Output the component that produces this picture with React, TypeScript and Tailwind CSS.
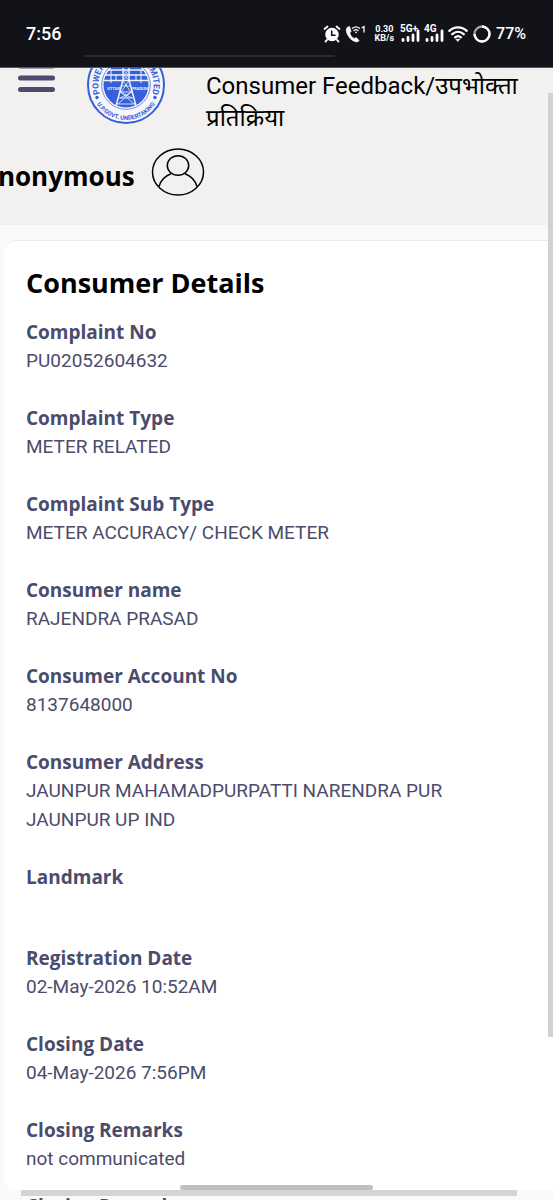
import type { ReactNode } from "react";

interface Detail {
  label: string;
  value: string;
}

const details: Detail[] = [
  { label: "Complaint No", value: "PU02052604632" },
  { label: "Complaint Type", value: "METER RELATED" },
  { label: "Complaint Sub Type", value: "METER ACCURACY/ CHECK METER" },
  { label: "Consumer name", value: "RAJENDRA PRASAD" },
  { label: "Consumer Account No", value: "8137648000" },
  { label: "Consumer Address", value: "JAUNPUR MAHAMADPURPATTI NARENDRA PUR JAUNPUR UP IND" },
  { label: "Landmark", value: "" },
  { label: "Registration Date", value: "02-May-2026 10:52AM" },
  { label: "Closing Date", value: "04-May-2026 7:56PM" },
  { label: "Closing Remarks", value: "not communicated" },
];

function AlarmIcon() {
  return (
    <svg width="18" height="18" viewBox="0 0 18 18" fill="none" stroke="white" strokeLinecap="round">
      <circle cx="9" cy="9.5" r="6.8" fill="white" stroke="none" />
      <path d="M1.5 4L4.500 1.5M16.5 4L13.500 1.5M4 15L2.5 16.500M14 15l1.500 1.500" strokeWidth="1.800" />
      <path d="M8.700 6V10.300H12" stroke="#111318" strokeWidth="1.600" />
    </svg>
  );
}

function CallIcon() {
  return (
    <svg width="22" height="18" viewBox="0 0 22 18" fill="none" stroke="white" strokeLinecap="round">
      <path
        d="M2 2.500C.8 4 1 6.500 2.200 9c1.600 3.400 4.300 6.500 7.500 7.600 2 .7 3.600.2 4.500-1.200l-3-2.900-2 1C7 12.300 5.600 10.300 4.800 8l1.400-1.700L4.600 1.600z"
        fill="white"
        strokeWidth="0.500"
      />
      <path d="M7.500 3.300c2-1.600 5-1.600 7 0M9 5.500c1.200-1 2.800-1 4 0" strokeWidth="1.300" />
      <circle cx="11" cy="7.300" r="0.900" fill="white" stroke="none" />
      <path d="M17.300 2.600L19 1.700V7" strokeWidth="1.300" />
    </svg>
  );
}

function Signal({ label }: { label: string }) {
  return (
    <span className="relative h-5 w-5">
      <svg width="20" height="20" viewBox="0 0 20 20" stroke="white" strokeWidth="2.800" strokeLinecap="round">
        <path d="M3 15.500v1M8 13.500v3M13 11v5.500M18 7v9.500" />
      </svg>
      <span className="absolute left-0 top-0 text-[10px] leading-[10px] font-bold">{label}</span>
    </span>
  );
}

function WifiIcon() {
  return (
    <svg width="20" height="18" viewBox="0 0 20 18" fill="none" stroke="white" strokeWidth="2.300" strokeLinecap="round">
      <path d="M1.300 5.800c5-4.700 12.400-4.700 17.400 0M4.300 9.200c3.400-3.100 8-3.100 11.400 0M7.100 12.300c1.800-1.500 4-1.500 5.800 0" />
      <path d="M8.300 14.300h3.400L10 16.200z" fill="white" strokeWidth="0.800" />
    </svg>
  );
}

function StatusBar() {
  return (
    <div className="relative z-10 h-[68px] shrink-0 bg-[#111318] text-white border-b border-[#55565a]">
      <div className="flex h-full items-center justify-between pl-[26px] pr-[27px]">
        <span className="text-lg font-medium">7:56</span>
        <div className="flex items-center gap-1">
          <AlarmIcon />
          <CallIcon />
          <span className="ml-1 mr-0.5 text-center text-[9px] leading-[9px] font-bold">
            0.30
            <br />
            KB/s
          </span>
          <Signal label="5G+" />
          <Signal label="4G" />
          <WifiIcon />
          <svg width="20" height="20" viewBox="0 0 20 20" fill="none" strokeWidth="2.300">
            <circle cx="10" cy="10" r="7.500" stroke="#a3a4a8" />
            <path d="M10 2.500A7.500 7.500 0 1 1 2.500 10" stroke="white" />
          </svg>
          <span className="text-base font-medium">77%</span>
        </div>
      </div>
      <div className="absolute bottom-2.5 left-[84px] right-[218px] h-0.5 rounded-full bg-[#292b30]" />
    </div>
  );
}

function PowerLogo() {
  return (
    <svg width="80" height="80" viewBox="0 0 80 80" fill="none" className="text-[#3560d8]">
      <defs>
        <path id="ring-left" d="M13.800 49A27.700 27.700 0 0 1 33 13.200" />
        <path id="ring-right" d="M47 13.200A27.700 27.700 0 0 1 66.200 49" />
        <path id="ring-bottom" d="M5.600 44A34.600 34.600 0 0 0 74.400 44" />
      </defs>
      <circle cx="40" cy="40" r="38" fill="#f7f7fb" stroke="currentColor" strokeWidth="2" />
      <circle cx="40" cy="40" r="24.300" stroke="currentColor" strokeWidth="0.700" />
      <circle cx="40" cy="40" r="22.500" fill="currentColor" />
      <g fill="currentColor" className="font-['Roboto',sans-serif] font-bold">
        <text fontSize="8.500">
          <textPath href="#ring-left">POWER</textPath>
        </text>
        <text fontSize="8.500" textAnchor="end">
          <textPath href="#ring-right" startOffset="100%">LIMITED</textPath>
        </text>
        <text fontSize="6" textAnchor="middle">
          <textPath href="#ring-bottom" startOffset="50%">U.P.GOVT. UNDERTAKING</textPath>
        </text>
      </g>
      <circle cx="11" cy="52.500" r="1.700" fill="currentColor" />
      <circle cx="69" cy="52.500" r="1.700" fill="currentColor" />
      <g stroke="#f4f5fb">
        <path d="M22 25h36M19 30h42M18 35.500h44" strokeWidth="1.300" />
        <path d="M37 18v17L30 61M43 18v17l7 26" strokeWidth="1.500" />
        <path d="M37 25l6 5-6 5M43 25l-6 5 6 5M36 41h8M34 47h12M33 53h14M31 59h18" strokeWidth="0.800" />
        <path d="M37 36l8 11-13 12M43 36l-8 11 13 12M34 47l12 6M46 47l-12 6" strokeWidth="0.800" />
        <path d="M25 25v13M55 25v13M30 30v6M50 30v6" strokeWidth="1" />
      </g>
      <g fill="#f4f5fb" fontSize="4" className="font-['Roboto',sans-serif] font-bold">
        <text x="34" y="44.500" textAnchor="end">UTTAR</text>
        <text x="46" y="44.500" fontSize="3.600">PRADESH</text>
      </g>
    </svg>
  );
}

function AvatarIcon() {
  return (
    <svg width="54" height="50" viewBox="0 0 54 50" fill="none" stroke="black" strokeWidth="1.500">
      <ellipse cx="27" cy="26" rx="25.500" ry="23" />
      <ellipse cx="27" cy="19.500" rx="10.700" ry="9.800" />
      <path d="M8 40.500C10 34 14 30 20 27.800M46 40.500C44 34 40 30 34 27.800" />
    </svg>
  );
}

function Header() {
  return (
    <header className="h-[157px] shrink-0 overflow-hidden bg-[#f2f1ef] text-black">
      <div className="flex">
        <button aria-label="Menu" className="ml-[18px] h-7 w-[37px] overflow-hidden">
          <svg width="37" height="28" viewBox="0 0 37 28" stroke="#4b4c70" strokeWidth="5" strokeLinecap="round">
            <path d="M2.500-2h32M2.500 10h32M2.500 21.500h32" />
          </svg>
        </button>
        <div className="-mt-[23px] ml-[31px] shrink-0">
          <PowerLogo />
        </div>
        <h1 className="ml-10 mt-0.5 flex-1 pr-6 font-['Roboto','Noto_Sans',sans-serif] text-2xl leading-8">
          Consumer Feedback/उपभोक्ता प्रतिक्रिया
        </h1>
      </div>
      <div className="-ml-5 mt-3 flex items-start gap-4">
        <span className="mt-2.5 font-['Open_Sans',sans-serif] text-[26px] leading-10 font-bold">Anonymous</span>
        <AvatarIcon />
      </div>
    </header>
  );
}

function Label({ children }: { children: ReactNode }) {
  return <dt className="font-['Open_Sans',sans-serif] text-[19px] leading-7 font-bold">{children}</dt>;
}

export default function App() {
  return (
    <div className="relative flex h-screen flex-col overflow-hidden bg-[#fafafa] font-['Roboto',sans-serif]">
      <StatusBar />
      <Header />
      <main className="mt-[15px] ml-1 flex-1 overflow-hidden rounded-l-xl border-t border-[#ededed] bg-white px-[22px] text-[#4b4c6c]">
        <h2 className="mt-6 font-['Open_Sans',sans-serif] text-[27px] leading-9 font-bold text-black">
          Consumer Details
        </h2>
        <dl className="mt-[17px]">
          {details.map((item) => (
            <div key={item.label} className="mb-[29px]">
              <Label>{item.label}</Label>
              <dd className="min-h-6 max-w-[440px] text-[19px] leading-[29px]">{item.value}</dd>
            </div>
          ))}
        </dl>
      </main>
      <footer className="relative h-2.5 shrink-0 overflow-hidden px-[26px] pt-0.5 text-[#4b4c6c]">
        <div className="absolute inset-x-0 top-0 h-1.5">
          <div className="ml-[21px] mr-9 h-full bg-[#d4d4d4]" />
        </div>
        <dl className="relative">
          <Label>Closing Remarks</Label>
        </dl>
      </footer>
      <div className="absolute bottom-2.5 left-[180px] h-[5px] w-[193px] rounded-full bg-[#c0c0c0]" />
      <div className="absolute right-0 top-[93px] bottom-[163px] w-[5px] bg-[#d1d1d1]" />
    </div>
  );
}
